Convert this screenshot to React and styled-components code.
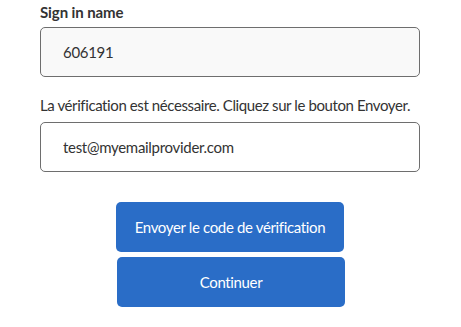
import React from "react";
import styled, { createGlobalStyle } from "styled-components";

const GlobalStyle = createGlobalStyle`
  html, body { margin: 0; padding: 0; background: #fff; }
  body { font-family: Lato, "Open Sans", sans-serif; color: #333; }
`;

const Form = styled.form`
  width: 380px;
  padding: 2px 0 0 40px;
  display: flex;
  flex-direction: column;
`;

const Label = styled.label`
  font-size: 15px;
  line-height: 20px;
  letter-spacing: ${p => (p.$bold ? "-0.1px" : "-0.4px")};
  white-space: nowrap;
  font-weight: ${p => (p.$bold ? 700 : 400)};
  color: #333;
  margin-bottom: ${p => p.$gap}px;
`;

const Input = styled.input`
  box-sizing: border-box;
  width: 380px;
  height: 50px;
  margin: 0;
  padding: 0 0 0 22px;
  border: 1px solid #6e6e6e;
  border-radius: 5px;
  background: ${p => (p.$muted ? "#f9f9f9" : "#fff")};
  font-family: Lato, "Open Sans", sans-serif;
  font-size: 15px;
  letter-spacing: -0.3px;
  color: #333;
  outline: none;
  margin-bottom: ${p => p.$after}px;
`;

const Actions = styled.div`
  display: flex;
  flex-direction: column;
  align-items: center;
  gap: 5px;
`;

const Button = styled.button`
  box-sizing: border-box;
  width: 228px;
  height: 50px;
  margin: 0;
  margin-left: ${p => p.$shift || 0}px;
  border: none;
  border-radius: 5px;
  background: #2a6dc7;
  color: #fff;
  font-family: Lato, "Open Sans", sans-serif;
  font-size: 15px;
  letter-spacing: -0.35px;
  cursor: pointer;
`;

export default function App() {
  return (
    <>
      <GlobalStyle />
      <Form onSubmit={e => e.preventDefault()}>
        <Label $bold $gap={5}>Sign in name</Label>
        <Input $muted $after={18} readOnly value="606191" />
        <Label $gap={7}>La vérification est nécessaire. Cliquez sur le bouton Envoyer.</Label>
        <Input $after={30} readOnly value="test@myemailprovider.com" />
        <Actions>
          <Button type="button">Envoyer le code de vérification</Button>
          <Button type="button" $shift={2}>Continuer</Button>
        </Actions>
      </Form>
    </>
  );
}
